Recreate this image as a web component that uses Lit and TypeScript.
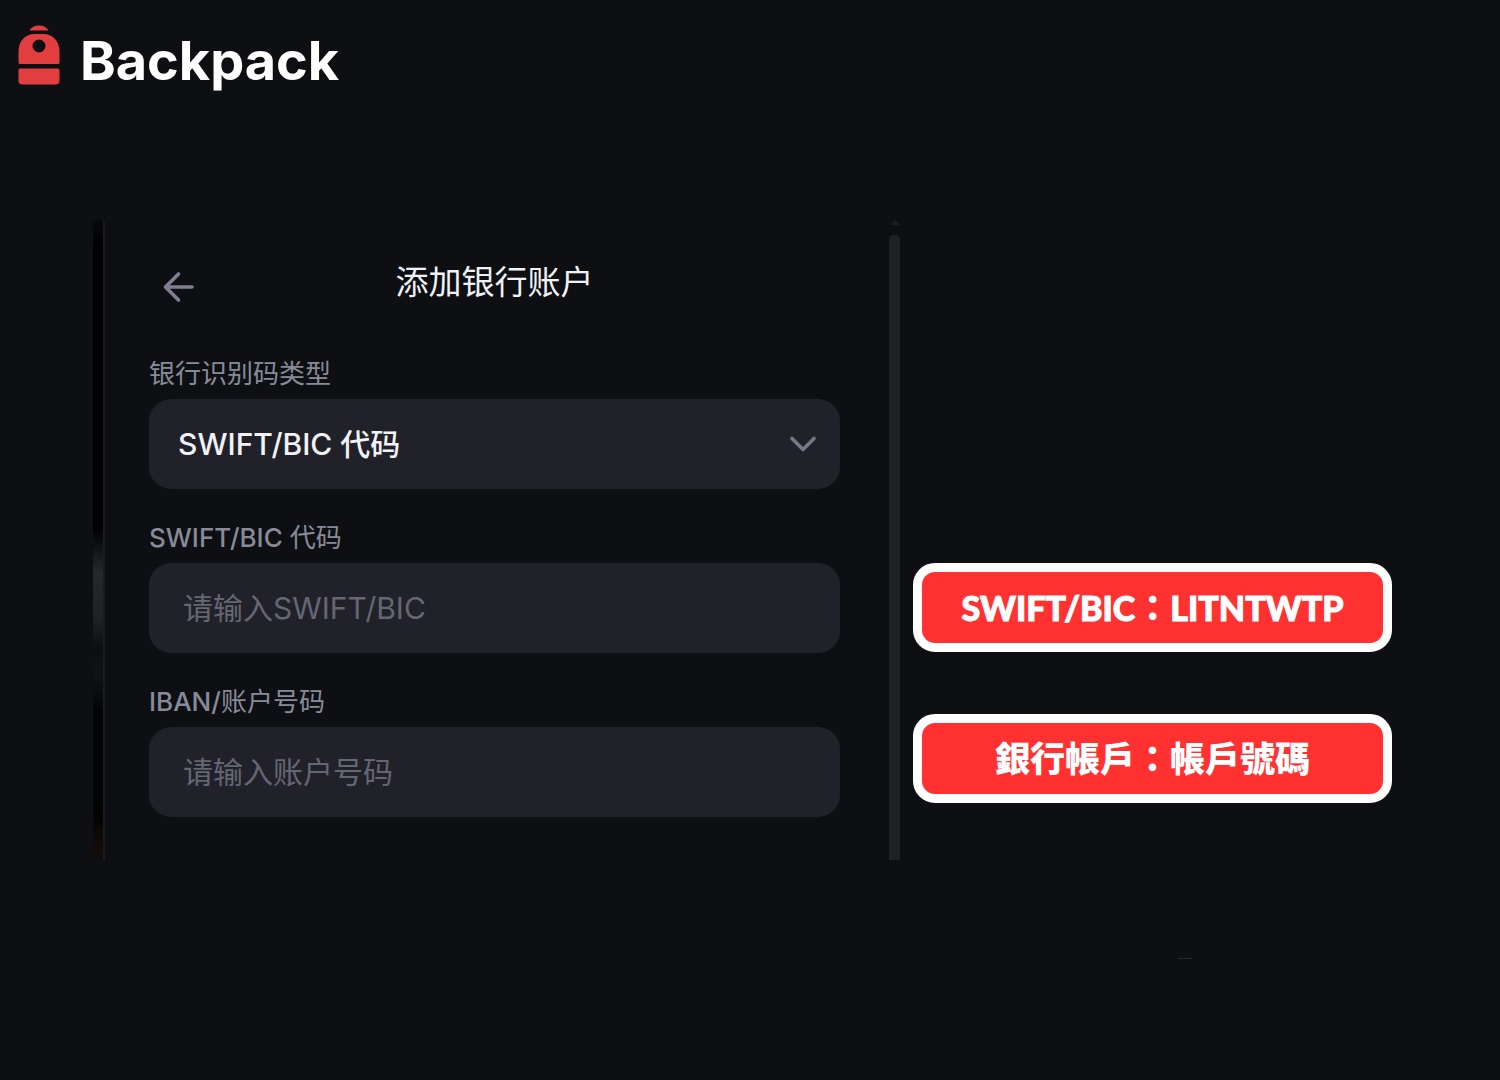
import { LitElement, html, css } from "lit";
import { customElement, property } from "lit/decorators.js";

@customElement("brand-logo")
class BrandLogo extends LitElement {
  static styles = css`
    :host { display: flex; align-items: flex-start; gap: 20px; color: #fff; }
    .mark { display: block; width: 42px; height: 60px; flex: none; }
    .name { font: 700 54px/72px "Inter", "Liberation Sans", sans-serif; }
  `;
  render() {
    return html`
      <svg class="mark" viewBox="0 0 42 60" fill="#e33e3f" aria-hidden="true">
        <path d="M11.500 5.500C13.500 2 16.500 .5 21 .5S28.500 2 30.500 5.500Z" />
        <path fill-rule="evenodd" d="M.5 27C.5 16 7 9 17 9h8C35 9 41.500 16 41.500 27v10.500q0 1.500-1.500 1.500H2Q.5 39 .5 37.500ZM21 14.500a6.500 6.500 0 1 0 0 13a6.500 6.500 0 1 0 0-13Z" />
        <path d="M2 43.500h38q1.500 0 1.500 1.500v10.500q0 4-4 4h-33q-4 0-4-4V45q0-1.500 1.500-1.500Z" />
      </svg>
      <span class="name">Backpack</span>
    `;
  }
}

@customElement("bank-form")
class BankForm extends LitElement {
  static styles = css`
    :host {
      display: flex;
      color: #f1f2f5;
      font-family: "Inter", "Noto Sans CJK SC", sans-serif;
    }
    .edge {
      flex: none;
      width: 10px;
      border-right: 2px solid #1b1c1f;
      border-top-right-radius: 4px;
      background: linear-gradient(#08090b 0, #000 4%, #000 48%, #252728 55%, #202223 62%, #0c0e0f 67%, #121414 71%, #020303 77%, #020303 92%, #120d09 98%);
    }
    .body { flex: 1; min-width: 0; padding: 36px 49px 43px 44px; }
    .top { display: grid; grid-template-columns: 60px 1fr 60px; align-items: center; margin-bottom: 49px; }
    .back { display: flex; padding: 14px 13px 4px; border: 0; background: none; color: #807e90; }
    .title { margin: 0; text-align: center; font-size: 33px; line-height: 52px; font-weight: 400; }
    .fields { display: flex; flex-direction: column; gap: 32px; }
    .field { display: flex; flex-direction: column; gap: 8px; }
    .label { font-size: 26px; line-height: 34px; font-weight: 500; color: #878b98; }
    .zh { font-weight: 400; }
    .control {
      box-sizing: border-box;
      width: 100%;
      height: 90px;
      border: 0;
      border-radius: 22px;
      background: #212129;
      color: inherit;
      font: 400 30px/40px "Inter", "Noto Sans CJK SC", sans-serif;
      padding: 0 34px;
      appearance: none;
      outline: none;
    }
    .control::placeholder { color: #656673; opacity: 1; }
    .select { display: grid; align-items: center; }
    .select > * { grid-area: 1 / 1; }
    .choice { padding: 0 29px; font-weight: 500; }
    .chevron { justify-self: end; margin-right: 23px; color: #777885; pointer-events: none; }
    .scroll { flex: none; width: 14px; display: flex; flex-direction: column; gap: 10px; color: #1a1b1f; }
    .thumb { flex: 1; width: 11px; border-radius: 5px 5px 0 0; background: #202126; }
    svg { display: block; fill: none; stroke: currentColor; stroke-linecap: round; stroke-linejoin: round; }
    .up { fill: currentColor; stroke: none; }
  `;
  render() {
    return html`
      <div class="edge"></div>
      <form class="body">
        <div class="top">
          <button class="back" type="button" aria-label="返回">
            <svg width="34" height="34" viewBox="0 0 34 34" stroke-width="3.600"><path d="M30 17H3.500M16.500 4L3.500 17l13 13" /></svg>
          </button>
          <h1 class="title">添加银行账户</h1>
        </div>
        <div class="fields">
          <div class="field">
            <label class="label" for="kind"><span class="zh">银行识别码类型</span></label>
            <div class="select">
              <select class="control choice" id="kind"><option>SWIFT/BIC 代码</option></select>
              <svg class="chevron" width="28" height="28" viewBox="0 0 28 28" stroke-width="3.600"><path d="M3 8.500l11 11 11-11" /></svg>
            </div>
          </div>
          <div class="field">
            <label class="label" for="swift">SWIFT/BIC <span class="zh">代码</span></label>
            <input class="control" id="swift" type="text" placeholder="请输入SWIFT/BIC" />
          </div>
          <div class="field">
            <label class="label" for="iban">IBAN/<span class="zh">账户号码</span></label>
            <input class="control" id="iban" type="text" placeholder="请输入账户号码" />
          </div>
        </div>
      </form>
      <div class="scroll">
        <svg class="up" width="14" height="5" viewBox="0 0 14 5"><path d="M6 0L11 5H1Z" /></svg>
        <div class="thumb"></div>
      </div>
    `;
  }
}

@customElement("note-badge")
class NoteBadge extends LitElement {
  @property() name = "";
  @property() value = "";
  static styles = css`
    :host {
      display: block;
      border: 9px solid #fff;
      border-radius: 22px;
      padding: 8px 10px 12px;
      background: #ff3131;
      color: #fff;
      text-align: center;
      font: 900 35px/51px "Noto Sans CJK TC", sans-serif;
    }
    .latin { font-family: "Lato", sans-serif; font-size: 34px; line-height: 34px; -webkit-text-stroke: 1px #fff; }
  `;
  private part(text: string) {
    return /^[\x00-\x7f]+$/.test(text) ? html`<span class="latin">${text}</span>` : text;
  }
  render() {
    return html`${this.part(this.name)}：${this.part(this.value)}`;
  }
}

@customElement("app-root")
class AppRoot extends LitElement {
  static styles = css`
    :host { display: block; min-height: 100vh; background: #0e0f13; }
    .header { padding: 25px 18px 23px; }
    .main { display: grid; grid-template-columns: 810fr 479fr; gap: 10px; padding: 100px 108px 0 93px; }
    .notes { display: flex; flex-direction: column; gap: 62px; padding-top: 343px; }
    .footer { display: flex; justify-content: flex-end; padding: 98px 308px 0 0; }
    .rule { width: 14px; height: 1px; margin: 0; border: 0; background: #292a2d; }
  `;
  render() {
    return html`
      <header class="header"><brand-logo></brand-logo></header>
      <main class="main">
        <bank-form></bank-form>
        <aside class="notes">
          <note-badge name="SWIFT/BIC" value="LITNTWTP"></note-badge>
          <note-badge name="銀行帳戶" value="帳戶號碼"></note-badge>
        </aside>
      </main>
      <footer class="footer"><hr class="rule" /></footer>
    `;
  }
}
